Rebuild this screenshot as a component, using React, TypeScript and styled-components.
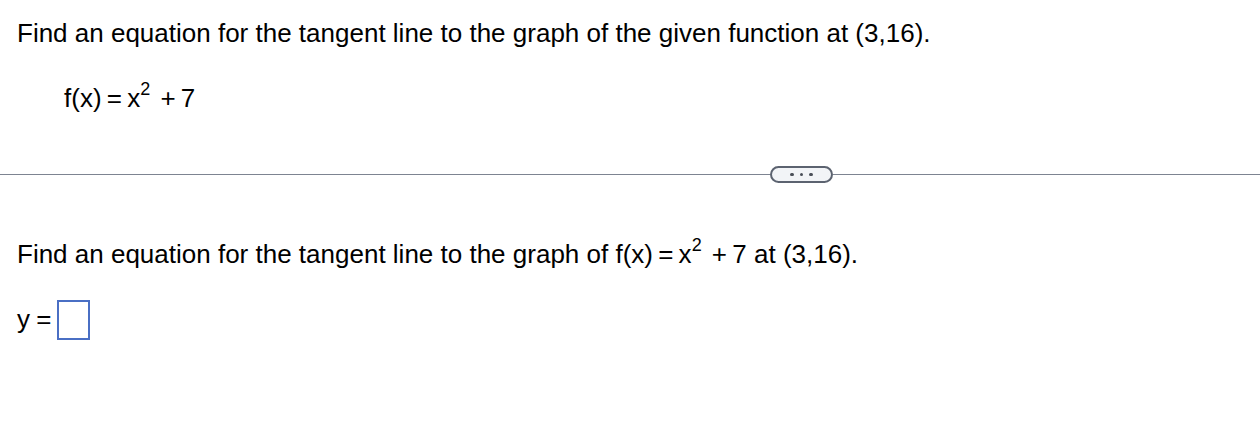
import React from "react";
import styled, { createGlobalStyle } from "styled-components";

const Global = createGlobalStyle`
  html, body { margin: 0; padding: 0; background: #fff; }
  body { font-family: "Liberation Sans", Arial, sans-serif; color: #000; }
`;

const Page = styled.div`
  width: 1260px;
  height: 446px;
  display: flex;
  flex-direction: column;
`;

const Top = styled.div`
  padding: 18px 0 0 17px;
  display: flex;
  flex-direction: column;
`;

const Question = styled.div`
  font-size: 26px;
  line-height: 30px;
  white-space: nowrap;
`;

const Formula = styled.div`
  font-size: 26px;
  line-height: 30px;
  margin: 35px 0 0 47px;
  white-space: nowrap;
`;

const Math = styled.span`
  word-spacing: -2px;
`;

const Sup = styled.span`
  font-size: 18px;
  position: relative;
  top: -12px;
  margin-right: 5px;
`;

const DividerRow = styled.div`
  margin-top: 50px;
  display: flex;
  align-items: center;
  height: 17px;
`;

const Line = styled.div<{ $grow: number }>`
  height: 1px;
  background: #7d8491;
  flex: ${(p) => p.$grow};
`;

const MoreButton = styled.div`
  flex: none;
  width: 59px;
  height: 13px;
  border: 2px solid #5c6370;
  border-radius: 9px;
  background: #f2f4f7;
  display: flex;
  align-items: center;
  justify-content: center;
  gap: 6px;
`;

const Dot = styled.span`
  width: 3.5px;
  height: 3.5px;
  border-radius: 50%;
  background: #4a4f58;
`;

const Bottom = styled.div`
  padding: 56px 0 0 17px;
  display: flex;
  flex-direction: column;
`;

const AnswerRow = styled.div`
  margin-top: 28px;
  display: flex;
  align-items: center;
  font-size: 26px;
  height: 40px;
`;

const Label = styled.span`
  margin-right: 6px;
  position: relative;
  top: -1px;
  word-spacing: -1px;
`;

const AnswerBox = styled.div`
  width: 29px;
  height: 36px;
  border: 2px solid #4a6fc4;
`;

export default function App() {
  return (
    <>
      <Global />
      <Page>
        <Top>
          <Question>
            Find an equation for the tangent line to the graph of the given function at (3,16).
          </Question>
          <Formula>
            <Math>
              f(x) = x<Sup>2</Sup> + 7
            </Math>
          </Formula>
        </Top>
        <DividerRow>
          <Line $grow={770} />
          <MoreButton>
            <Dot />
            <Dot />
            <Dot />
          </MoreButton>
          <Line $grow={427} />
        </DividerRow>
        <Bottom>
          <Question>
            Find an equation for the tangent line to the graph of{" "}
            <Math>
              f(x) = x<Sup>2</Sup> + 7
            </Math>{" "}
            at (3,16).
          </Question>
          <AnswerRow>
            <Label>y =</Label>
            <AnswerBox />
          </AnswerRow>
        </Bottom>
      </Page>
    </>
  );
}
